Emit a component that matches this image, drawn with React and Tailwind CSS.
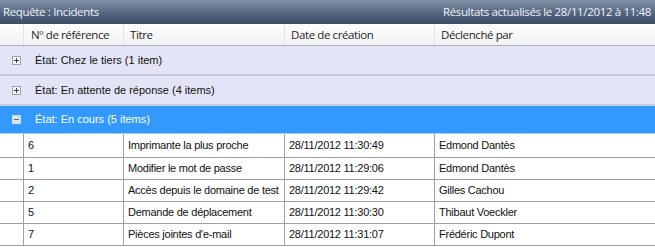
import React from 'react';

const rows = [
  { id: '6', title: 'Imprimante la plus proche', date: '28/11/2012 11:30:49', by: 'Edmond Dantès' },
  { id: '1', title: 'Modifier le mot de passe', date: '28/11/2012 11:29:06', by: 'Edmond Dantès' },
  { id: '2', title: 'Accès depuis le domaine de test', date: '28/11/2012 11:29:42', by: 'Gilles Cachou' },
  { id: '5', title: 'Demande de déplacement', date: '28/11/2012 11:30:30', by: 'Thibaut Voeckler' },
  { id: '7', title: "Pièces jointes d'e-mail", date: '28/11/2012 11:31:07', by: 'Frédéric Dupont' },
];

const groups = [
  { label: 'État: Chez le tiers (1 item)', open: false },
  { label: 'État: En attente de réponse (4 items)', open: false },
  { label: 'État: En cours (5 items)', open: true },
];

const ToggleBox = ({ open }) => (
  <span
    className={`w-[9px] h-[9px] flex items-center justify-center border ${
      open ? 'border-[#c9dcf2] bg-[#d7e4f3]' : 'border-[#9aa3b5] bg-[#f4f6fb]'
    }`}
  >
    {open ? (
      <span className="w-[5px] h-[1px] bg-[#5d6b80]" />
    ) : (
      <span className="relative w-[5px] h-[5px]">
        <span className="absolute left-0 top-[2px] w-[5px] h-[1px] bg-[#3c4454]" />
        <span className="absolute left-[2px] top-0 w-[1px] h-[5px] bg-[#3c4454]" />
      </span>
    )}
  </span>
);

export default function App() {
  return (
    <div className="w-[655px] h-[247px] bg-white overflow-hidden flex flex-col">
      {/* title bar */}
      <div className="h-[24px] shrink-0 flex items-center justify-between pl-[3px] pr-[4px] bg-gradient-to-b from-[#8291a6] via-[#586a83] to-[#3b4c64] text-[#eef1f6] text-[11.5px] font-['Open_Sans',sans-serif] tracking-[-0.35px]">
        <span>Requête : Incidents</span>
        <span>Résultats actualisés le 28/11/2012 à 11:48</span>
      </div>

      {/* column headers */}
      <div className="h-[22px] shrink-0 grid grid-cols-[24px_100px_161px_150px_1fr] bg-gradient-to-b from-white to-[#f2f2f4] border-b border-[#a9adb4] text-[#1e1e1e] text-[11.5px] font-['Open_Sans',sans-serif] tracking-[-0.4px]">
        <div className="border-r border-[#e3e3e6]" />
        <div className="border-r border-[#e3e3e6] pl-[7px] flex items-center">Nº de référence</div>
        <div className="border-r border-[#e3e3e6] pl-[6px] flex items-center">Titre</div>
        <div className="border-r border-[#e3e3e6] pl-[6px] flex items-center">Date de création</div>
        <div className="pl-[6px] flex items-center">Déclenché par</div>
      </div>

      {/* groups */}
      {groups.map((g) => (
        <div
          key={g.label}
          className={`shrink-0 flex items-center gap-[14px] pl-[12px] text-[11px] font-['Liberation_Sans',Arial,sans-serif] ${
            g.open
              ? 'h-[28px] bg-[#3399ff] text-white border-b border-[#a8cdf5]'
              : 'h-[30px] bg-[#e3e5f7] text-[#111] border-b-2 border-[#c3cade]'
          }`}
        >
          <ToggleBox open={g.open} />
          <span>{g.label}</span>
        </div>
      ))}

      {/* rows */}
      <div className="flex flex-col text-[11px] text-[#111] font-['Liberation_Sans',Arial,sans-serif] tracking-[-0.25px]">
        {rows.map((r, i) => (
          <div
            key={r.id}
            className={`grid grid-cols-[24px_100px_161px_150px_1fr] border-b border-[#a0a0a0] ${
              i === 0 ? 'h-[24px]' : 'h-[22px]'
            }`}
          >
            <div className="border-r border-[#a0a0a0]" />
            <div className="border-r border-[#a0a0a0] pl-[4px] flex items-center">{r.id}</div>
            <div className="border-r border-[#a0a0a0] pl-[4px] flex items-center whitespace-nowrap">{r.title}</div>
            <div className="border-r border-[#a0a0a0] pl-[4px] flex items-center">{r.date}</div>
            <div className="pl-[4px] flex items-center">{r.by}</div>
          </div>
        ))}
      </div>
    </div>
  );
}
